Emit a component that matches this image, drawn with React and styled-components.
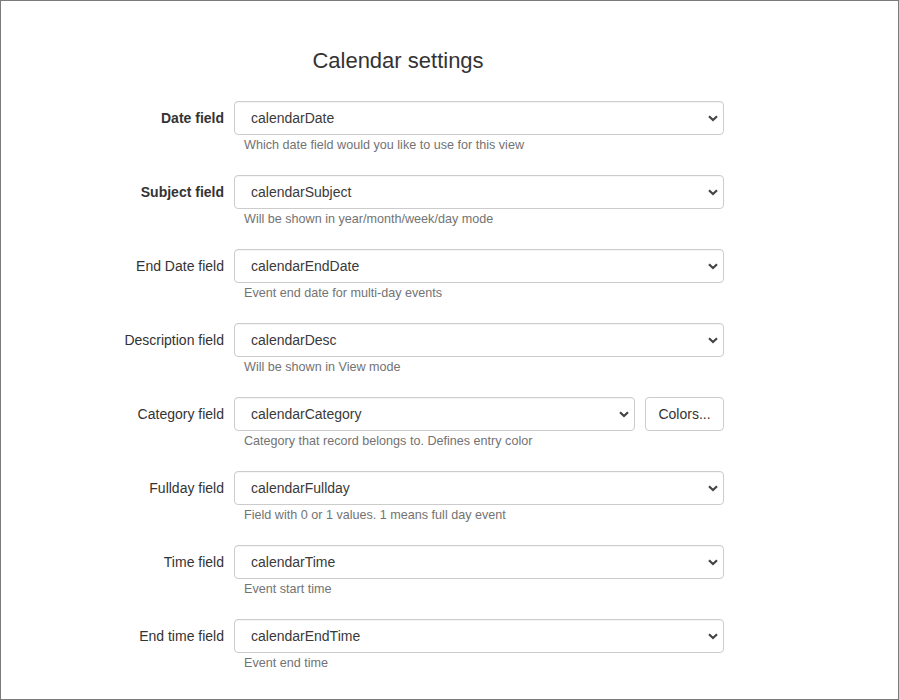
import React from 'react'
import styled, { createGlobalStyle } from 'styled-components'

const GlobalStyle = createGlobalStyle`
    html, body {
        margin: 0;
        padding: 0;
        background: #fff;
    }
    body {
        font-family: "Liberation Sans", Arial, sans-serif;
        font-size: 14px;
        color: #333;
    }
`

const Frame = styled.div`
    box-sizing: border-box;
    width: 899px;
    height: 700px;
    border: 1px solid #7b7b7b;
    overflow: hidden;
    padding: 48px 0 0 71px;
`

const Form = styled.div`
    width: 652px;
`

const Title = styled.h3`
    margin: 0 0 28px;
    font-size: 22px;
    font-weight: 400;
    line-height: 24px;
    text-align: center;
    color: #333;
`

const Row = styled.div`
    display: grid;
    grid-template-columns: 152px 490px;
    column-gap: 10px;
    margin-bottom: 22px;
`

const Label = styled.label`
    text-align: right;
    line-height: 34px;
    font-weight: ${p => (p.$bold ? 700 : 400)};
    white-space: nowrap;
`

const Controls = styled.div`
    display: flex;
    gap: 10px;
`

const SelectBox = styled.div`
    position: relative;
    flex: 1;
    box-sizing: border-box;
    height: 34px;
    border: 1px solid #ccc;
    border-radius: 4px;
    background: #fff;
    padding: 0 30px 0 16px;
    line-height: 32px;
    color: #3a3a3a;
    box-shadow: inset 0 1px 1px rgba(0, 0, 0, 0.04);
`

const Chevron = styled.svg`
    position: absolute;
    right: 5px;
    top: 13px;
`

const Button = styled.button`
    box-sizing: border-box;
    width: 79px;
    height: 34px;
    border: 1px solid #ccc;
    border-radius: 4px;
    background: #fff;
    font-family: inherit;
    font-size: 14px;
    color: #333;
    padding: 0;
`

const Help = styled.div`
    margin-top: 2px;
    padding-left: 10px;
    font-size: 12.6px;
    line-height: 16px;
    color: #737373;
`

const fields = [
    { label: 'Date field', value: 'calendarDate', help: 'Which date field would you like to use for this view', bold: true },
    { label: 'Subject field', value: 'calendarSubject', help: 'Will be shown in year/month/week/day mode', bold: true },
    { label: 'End Date field', value: 'calendarEndDate', help: 'Event end date for multi-day events' },
    { label: 'Description field', value: 'calendarDesc', help: 'Will be shown in View mode' },
    { label: 'Category field', value: 'calendarCategory', help: 'Category that record belongs to. Defines entry color', colors: true },
    { label: 'Fullday field', value: 'calendarFullday', help: 'Field with 0 or 1 values. 1 means full day event' },
    { label: 'Time field', value: 'calendarTime', help: 'Event start time' },
    { label: 'End time field', value: 'calendarEndTime', help: 'Event end time' },
]

const Select = ({ value }) => (
    <SelectBox>
        {value}
        <Chevron width="10" height="7" viewBox="0 0 10 7">
            <path d="M1 1.2 L5 5 L9 1.2" fill="none" stroke="#444" strokeWidth="2.2" />
        </Chevron>
    </SelectBox>
)

export default function App() {
    return (
        <>
            <GlobalStyle />
            <Frame>
                <Form>
                    <Title>Calendar settings</Title>
                    {fields.map(f => (
                        <Row key={f.value}>
                            <Label $bold={f.bold}>{f.label}</Label>
                            <div>
                                <Controls>
                                    <Select value={f.value} />
                                    {f.colors && <Button>Colors...</Button>}
                                </Controls>
                                <Help>{f.help}</Help>
                            </div>
                        </Row>
                    ))}
                </Form>
            </Frame>
        </>
    )
}
